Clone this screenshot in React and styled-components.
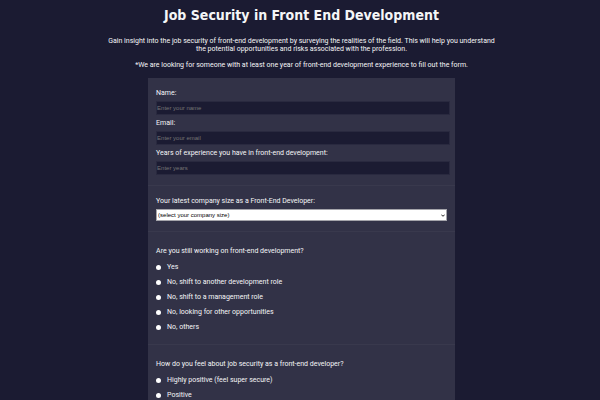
import React from "react";
import styled, { createGlobalStyle } from "styled-components";

const GlobalStyle = createGlobalStyle`
  * { box-sizing: border-box; }
  html { background: #1b1b32; }
  body {
    margin: 0;
    background: #1b1b32;
    color: #f5f6f7;
    font-family: Roboto, Tahoma, sans-serif;
    font-size: 7px;
    line-height: 8px;
    overflow-x: hidden;
    scrollbar-width: none;
  }
  body::-webkit-scrollbar { display: none; }
`;

const Page = styled.main`
  height: 100vh;
  overflow: hidden;
  padding: 6px 9px 0 12px;
`;

const Title = styled.h1`
  margin: 0;
  font-family: "DejaVu Sans Condensed", Tahoma, sans-serif;
  font-size: 14px;
  line-height: 18px;
  text-align: center;
`;

const Intro = styled.div`
  max-width: 396px;
  margin: 13px auto 0;
  text-align: center;
`;

const Paragraph = styled.p`
  margin: 0 0 8px;
`;

const Form = styled.form`
  width: 53%;
  min-width: 300px;
  margin: 9px auto 0;
  background: #323247;
`;

const Section = styled.fieldset`
  margin: 0;
  min-width: 0;
  border: 0;
  border-bottom: 1px solid #39394d;
  padding: ${(p) => (p.$roomy ? "15px 8px 13px" : "11px 8px 10px")};
`;

const Field = styled.label`
  display: block;
  & + & { margin-top: 4px; }
`;

const TextInput = styled.input`
  display: block;
  width: calc(100% + 3px);
  height: 14px;
  margin-top: 4px;
  padding: 0;
  border: 1px solid #29293f;
  background: #1b1b32;
  color: #f5f6f7;
  font: 6px "Liberation Sans", Arial, sans-serif;
  &::placeholder { color: #757575; opacity: 1; }
`;

const SelectBox = styled.span`
  display: grid;
  align-items: center;
  margin-top: 4px;
`;

const Select = styled.select`
  grid-area: 1 / 1;
  appearance: none;
  width: 100%;
  height: 12px;
  padding: 0 1px;
  border: 1px solid #a5a5ab;
  border-radius: 0;
  background: #fff;
  color: #000;
  font: 6px "Liberation Sans", Arial, sans-serif;
`;

const Chevron = styled.svg`
  grid-area: 1 / 1;
  justify-self: end;
  width: 4px;
  height: 3px;
  margin-right: 2px;
  pointer-events: none;
`;

const Question = styled.legend`
  padding: 0;
  float: left;
  width: 100%;
  margin-bottom: 8px;
`;

const Choice = styled.label`
  clear: both;
  display: flex;
  align-items: center;
  gap: 6px;
  height: 8px;
  & + & { margin-top: 7px; }
`;

const Radio = styled.input`
  appearance: none;
  flex: none;
  width: 5px;
  height: 5px;
  margin: 0;
  border-radius: 50%;
  background: #fff;
  &:checked { box-shadow: inset 0 0 0 1px #fff; background: #0075ff; }
`;

const fields = [
  { id: "name", label: "Name:", type: "text", hint: "Enter your name" },
  { id: "email", label: "Email:", type: "email", hint: "Enter your email" },
  {
    id: "years",
    label: "Years of experience you have in front-end development:",
    type: "number",
    hint: "Enter years",
  },
];

const questions = [
  {
    id: "working",
    text: "Are you still working on front-end development?",
    choices: [
      "Yes",
      "No, shift to another development role",
      "No, shift to a management role",
      "No, looking for other opportunities",
      "No, others",
    ],
  },
  {
    id: "feeling",
    text: "How do you feel about job security as a front-end developer?",
    choices: ["Highly positive (feel super secure)", "Positive"],
  },
];

export default function App() {
  return (
    <>
      <GlobalStyle />
      <Page>
        <Title>Job Security in Front End Development</Title>
        <Intro>
          <Paragraph>
            Gain insight into the job security of front-end development by
            surveying the realities of the field. This will help you understand
            the potential opportunities and risks associated with the
            profession.
          </Paragraph>
          <Paragraph>
            *We are looking for someone with at least one year of front-end
            development experience to fill out the form.
          </Paragraph>
        </Intro>
        <Form>
          <Section>
            {fields.map((f) => (
              <Field key={f.id} htmlFor={f.id}>
                {f.label}
                <TextInput id={f.id} type={f.type} placeholder={f.hint} />
              </Field>
            ))}
          </Section>
          <Section>
            <Field htmlFor="size">
              Your latest company size as a Front-End Developer:
              <SelectBox>
                <Select id="size" defaultValue="">
                  <option value="">(select your company size)</option>
                </Select>
                <Chevron viewBox="0 0 4 3" aria-hidden="true">
                  <path d="M.3 .6 2 2.3 3.7 .6" fill="none" stroke="#222" />
                </Chevron>
              </SelectBox>
            </Field>
          </Section>
          {questions.map((q) => (
            <Section key={q.id} $roomy>
              <Question>{q.text}</Question>
              {q.choices.map((c) => (
                <Choice key={c}>
                  <Radio type="radio" name={q.id} value={c} />
                  {c}
                </Choice>
              ))}
            </Section>
          ))}
        </Form>
      </Page>
    </>
  );
}
